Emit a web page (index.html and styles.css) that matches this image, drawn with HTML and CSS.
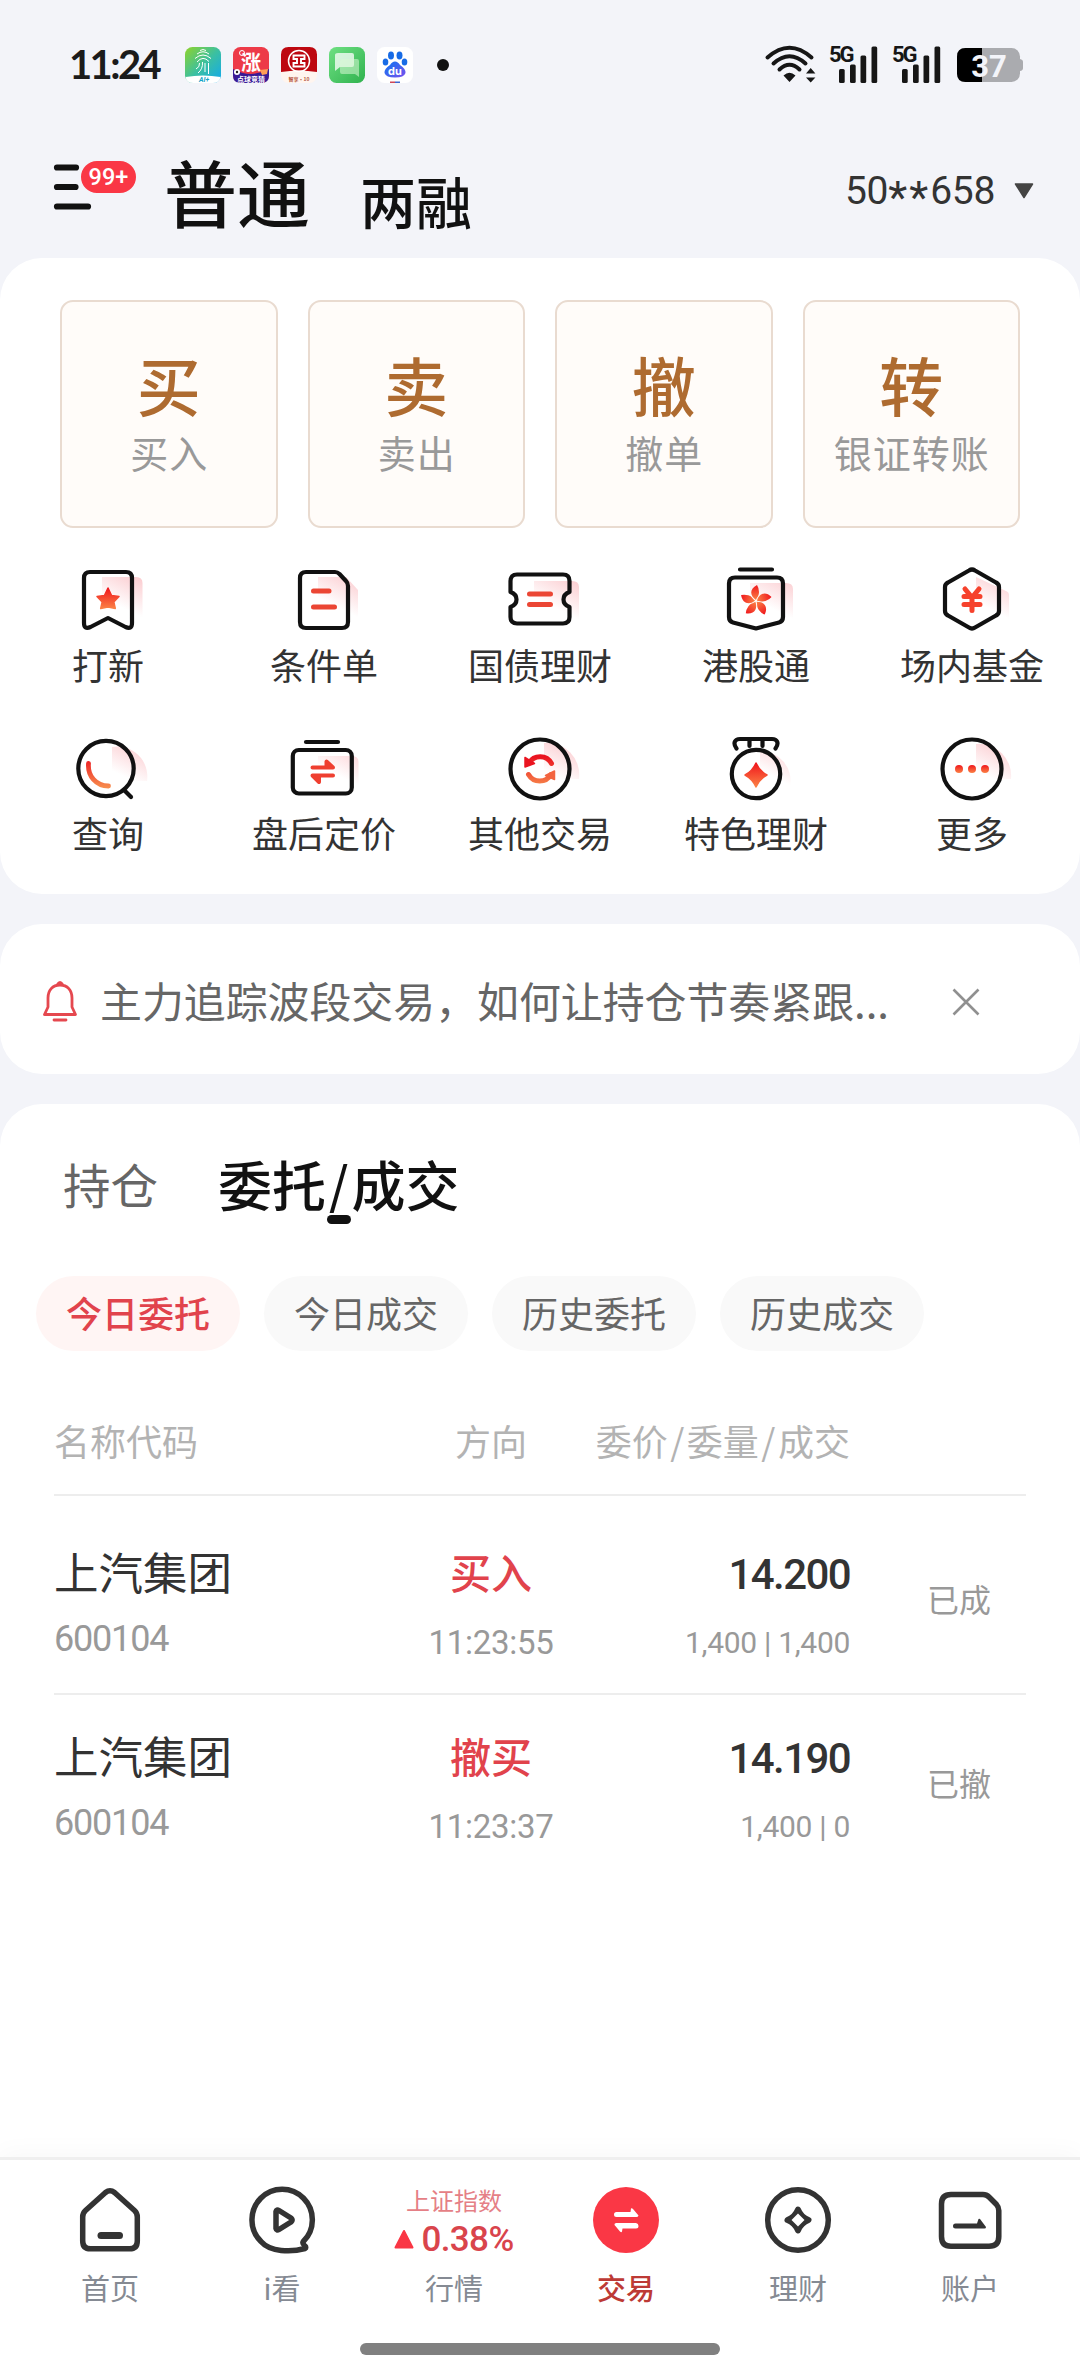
FILE: index.html
```html
<!DOCTYPE html>
<html lang="zh-CN">
<head>
<meta charset="utf-8">
<title>交易</title>
<link rel="stylesheet" href="styles.css">
</head>
<body>
<svg class="defs" width="0" height="0" aria-hidden="true">
  <defs>
    <linearGradient id="hot" x1="0" y1="0" x2="0" y2="1"><stop offset="0" stop-color="#f0161c"/><stop offset="1" stop-color="#fb8246"/></linearGradient>
    <linearGradient id="hotUser" gradientUnits="userSpaceOnUse" x1="0" y1="24" x2="0" y2="54"><stop offset="0" stop-color="#ea1420"/><stop offset="1" stop-color="#f78a4c"/></linearGradient>
    <linearGradient id="glow" gradientUnits="userSpaceOnUse" x1="70" y1="10" x2="53" y2="44"><stop offset="0" stop-color="#fbc8cc"/><stop offset="1" stop-color="#fbc8cc" stop-opacity="0"/></linearGradient>
  </defs>
</svg>
<div class="screen">
  <div class="statusbar">
    <span class="clock">11:24</span>
    <div class="apps">
      <svg viewBox="0 0 36 36"><defs><linearGradient id="a1" x1="0" y1="0" x2="1" y2="1"><stop offset="0" stop-color="#8fd32a"/><stop offset=".5" stop-color="#3cc0a0"/><stop offset="1" stop-color="#10a8f0"/></linearGradient></defs><rect width="36" height="36" rx="7.5" fill="url(#a1)"/><path d="M.5 30Q18 27 35.500 30Q34.500 36 28 36H8Q1.500 36 .5 30Z" fill="#fff"/><g fill="none" stroke="#fff" stroke-width="1"><path d="M15 3.500Q18 1.500 21 3.500M12 7Q18 2.500 24 7M10 11.500Q18 4.500 26 11.500M12 15Q18 8 24 14.500M13 26Q18 22 17.500 15M20 16V25M23.500 16V27M11 22Q15 20 14.500 16"/></g><text x="19" y="35" class="t-ai">AI+</text></svg>
      <svg viewBox="0 0 36 36"><rect width="36" height="36" rx="7.500" fill="#ed3a48"/><path d="M0 22Q18 32 36 22V28.500Q36 36 28.500 36H7.500Q0 36 0 28.500Z" fill="#391a96"/><circle cx="4" cy="25" r="3" fill="#fff"/><circle cx="4" cy="25" r="1.200" fill="#222"/><path d="M27 23L35 22 34 27 29 28Z" fill="#ff9d57"/><circle cx="9" cy="6" r="2.500" fill="none" stroke="#fff"/><text x="18" y="23" class="t-up">涨</text><text x="18" y="34.500" class="t-game">点球竞猜</text></svg>
      <svg viewBox="0 0 36 36"><rect width="36" height="36" rx="7.500" fill="#fff5ef"/><path d="M0 25V7.500Q0 0 7.500 0H28.500Q36 0 36 7.500V25Q18 22 0 25Z" fill="#bd0710"/><g fill="none" stroke="#fff"><circle cx="18" cy="14" r="10.500" stroke-width="1.500"/><path stroke-width="1.900" d="M12.500 8.500H23.500V12H20V16H23.500V19.500H12.500V16H16V12H12.500Z"/></g><text x="18" y="34" class="t-bank">智享·10</text></svg>
      <svg viewBox="0 0 36 36"><defs><linearGradient id="a4" x1="0" y1="0" x2="1" y2="1"><stop offset="0" stop-color="#6fe083"/><stop offset="1" stop-color="#2fb24e"/></linearGradient></defs><rect width="36" height="36" rx="7.500" fill="url(#a4)"/><path d="M9 6H23Q25 6 25 8V18Q25 20 23 20H11L6 24V8Q6 6 9 6Z" fill="#fff" opacity=".75"/><path d="M13 12H28Q30 12 30 14V30L26 27H13Q11 27 11 25V14Q11 12 13 12Z" fill="#d8f8d5" opacity=".55"/></svg>
      <svg viewBox="0 0 36 36"><defs><linearGradient id="a5" x1="0" y1="0" x2="1" y2="1"><stop offset="0" stop-color="#0a76f0"/><stop offset="1" stop-color="#7950ee"/></linearGradient></defs><rect width="36" height="36" rx="7.500" fill="#fff"/><g fill="#176be6"><ellipse cx="14" cy="8.500" rx="3" ry="4"/><ellipse cx="22.500" cy="8.500" rx="3" ry="4"/><ellipse cx="8.500" cy="15" rx="2.800" ry="3.500"/><ellipse cx="27.500" cy="15" rx="2.800" ry="3.500"/></g><path d="M18 14.500Q21 14.500 23 18Q29 22 28.500 26Q27 30.500 18 30.500T7.500 26Q7 22 13 18Q15 14.500 18 14.500Z" fill="url(#a5)"/><text x="18" y="28" class="t-du">du</text><path d="M13 34.500H18V36H13Z" fill="#cd4657"/><path d="M18 34.500H23V36H18Z" fill="#3f68d0"/></svg>
    </div>
    <i class="more-dot"></i>
    <div class="signals">
      <svg class="wifi" viewBox="0 0 51 38"><g fill="none" stroke="#161616" stroke-width="4" stroke-linecap="round"><path d="M2.500 12.500Q24.500-7 46.500 12.500M8.500 18.500Q24.500 4 40.500 18.500M14.500 24.500Q24.500 15 34.500 24.500"/></g><path d="M18.500 30.500Q24.500 25 30.500 30.500L24.500 37Z M41 28.500L45.700 23 50.400 28.500Z M41 32.500H50.400L45.700 37.500Z" fill="#161616"/></svg>
      <svg class="cell" viewBox="0 0 50 38"><text x="0" y="17" class="t-5g">5G</text><g fill="#161616"><rect x="10" y="24" width="5.700" height="14" rx="1.500"/><rect x="21" y="19.500" width="5.700" height="18.500" rx="1.500"/><rect x="31.500" y="10.500" width="5.700" height="27.500" rx="1.500"/><rect x="42.500" y="1.500" width="5.700" height="36.500" rx="1.500"/></g></svg>
      <svg class="cell" viewBox="0 0 50 38"><text x="0" y="17" class="t-5g">5G</text><g fill="#161616"><rect x="10" y="24" width="5.700" height="14" rx="1.500"/><rect x="21" y="19.500" width="5.700" height="18.500" rx="1.500"/><rect x="31.500" y="10.500" width="5.700" height="27.500" rx="1.500"/><rect x="42.500" y="1.500" width="5.700" height="36.500" rx="1.500"/></g></svg>
      <svg class="battery" viewBox="0 0 66 34"><rect width="63" height="34" rx="8.500" fill="#aaabaf"/><path d="M63 11Q66 11.500 66 14V20Q66 22.500 63 23Z" fill="#aaabaf"/><path d="M25 0V34H8.500Q0 34 0 25.500V8.500Q0 0 8.500 0Z" fill="#000"/><text x="32" y="28.500" class="t-bat">37</text></svg>
    </div>
  </div>

  <header class="topbar">
    <div class="menu">
      <svg viewBox="0 0 37 46"><path d="M3 3.500H22M3 23H21.500M3 42.500H34" fill="none" stroke="#111" stroke-width="6.200" stroke-linecap="round"/></svg>
      <span class="badge">99+</span>
    </div>
    <span class="mode mode-on">普通</span>
    <span class="mode">两融</span>
    <div class="account"><span>50<b>**</b>658</span><svg viewBox="0 0 20 16"><path d="M1.500 1H18.500L10 14.500Z" fill="#444" stroke="#444" stroke-width="1.500" stroke-linejoin="round"/></svg></div>
  </header>

  <section class="card actions">
    <div class="quick">
      <div class="tile"><b>买</b><span>买入</span></div>
      <div class="tile"><b>卖</b><span>卖出</span></div>
      <div class="tile"><b>撤</b><span>撤单</span></div>
      <div class="tile"><b>转</b><span>银证转账</span></div>
    </div>
    <div class="grid">
      <div class="entry"><svg viewBox="0 0 72 72"><path class="glow" d="M30 12H64Q70.500 12 70.500 18V55H30Z"/><path class="ink" d="M18 7H54Q60 7 60 13V58Q60 65 53.500 62L36 53 18.500 62Q12 65 12 58V13Q12 7 18 7Z"/><path d="M36 23L39.600 30.500 47 31.500 41.800 37 43.300 43.500 36 42 28.700 43.500 30.200 37 25 31.500 32.400 30.500Z" fill="url(#hot)" stroke="url(#hot)" stroke-width="1.500" stroke-linejoin="round"/></svg><span>打新</span></div>
      <div class="entry"><svg viewBox="0 0 72 72"><path class="glow" d="M30 12H58L70 25V60H30Z"/><path class="ink" d="M18 7H47Q49.500 7 51.500 9L58 16Q60 18 60 21V57Q60 63 54 63H18Q12 63 12 57V13Q12 7 18 7Z"/><path class="red" d="M25.500 26H41M25.500 42H46.500"/></svg><span>条件单</span></div>
      <div class="entry"><svg viewBox="0 0 72 72"><path class="glow" d="M30 16H68Q75 16 75 22V55H30Z"/><path class="ink" d="M13 9.500H59Q65.500 9.500 65.500 16V27Q59.500 29 59.500 34.500T65.500 42V52Q65.500 58.500 59 58.500H13Q6.500 58.500 6.500 52V42Q12.500 40 12.500 34.500T6.500 27V16Q6.500 9.500 13 9.500Z"/><path class="red" d="M25.500 29H46.500M25.500 39.500H46.500"/></svg><span>国债理财</span></div>
      <div class="entry"><svg viewBox="0 0 72 72"><path class="glow" d="M30 18H66Q73 18 73 24V55H30Z"/><path class="ink" d="M20 4.500H52M15 12.500H57Q63 12.500 63 18.500V52Q63 56.500 59 57.500L36 63.500 13 57.500Q9 56.500 9 52V18.500Q9 12.500 15 12.500Z"/><g fill="url(#hot)"><path id="pt" d="M36 35C30 31 29 24 37 20Q39 23 39 27C39 31 37 32 36 35Z"/><use href="#pt" transform="rotate(72 36 36)"/><use href="#pt" transform="rotate(144 36 36)"/><use href="#pt" transform="rotate(216 36 36)"/><use href="#pt" transform="rotate(288 36 36)"/></g></svg><span>港股通</span></div>
      <div class="entry"><svg viewBox="0 0 72 72"><path class="glow" d="M40 12L70 26Q73 27 73 30V62H40Z"/><path class="ink" d="M33 5.500Q36 3.500 39 5.500L60 17.500Q63 19 63 22V46Q63 49 60 50.500L39 62.500Q36 64.500 33 62.500L12 50.500Q9 49 9 46V22Q9 19 12 17.500Z"/><path class="yen" d="M29 24L36 32.500 43 24M28 31.500H44M28 39.500H44M36 32V45.500"/></svg><span>场内基金</span></div>

      <div class="entry"><svg viewBox="0 0 72 72"><path class="glow" d="M40 14A30 30 0 0 1 75 48L40 48Z"/><circle class="ink" cx="34" cy="35.500" r="27.700"/><path class="ink" d="M53 58L59 64"/><path d="M16.500 30.500C15.500 43 24 53 36.500 53" fill="none" stroke="url(#hotUser)" stroke-width="4.800" stroke-linecap="round"/></svg><span>查询</span></div>
      <div class="entry"><svg viewBox="0 0 72 72"><path class="glow" d="M30 23H64Q70.500 23 70.500 29V58H30Z"/><path class="ink" d="M18 9H50"/><rect class="ink" x="4.800" y="17" width="59" height="43.500" rx="6"/><path class="arrows" d="M24.500 34.500H45L38.500 28.500V34M45 42.500H24.500L31 49V43"/></svg><span>盘后定价</span></div>
      <div class="entry"><svg viewBox="0 0 72 72"><path class="glow" d="M40 10A32 32 0 0 1 75 46L40 46Z"/><circle class="ink" cx="36" cy="36" r="29.500"/><g fill="none" stroke="url(#hotUser)" stroke-width="5" stroke-linecap="round"><path d="M25 30A13 13 0 0 1 47.500 30.500M47 41.500A13 13 0 0 1 24.500 41.500"/></g><path d="M21 24.500V34L30.500 30.500Z" fill="#ea1420" stroke="#ea1420" stroke-width="1.500" stroke-linejoin="round"/><path d="M50.500 46.500V38L41.500 42.500Z" fill="#f36440" stroke="#f36440" stroke-width="1.500" stroke-linejoin="round"/></svg><span>其他交易</span></div>
      <div class="entry"><svg viewBox="0 0 72 72"><path class="glow" d="M40 18A30 30 0 0 1 70 54L40 52Z"/><path class="ink" d="M16.500 15.500C12.500 10 15 6 20 6H52C57 6 59.500 10 55.500 15.500M29.500 7V13M42.500 7V13"/><circle class="ink" cx="36" cy="41" r="24.200"/><path d="M36 30Q39.500 38 47 42Q39.500 46 36 54Q32.500 46 25 42Q32.500 38 36 30Z" fill="url(#hot)" stroke="url(#hot)" stroke-width="1.500" stroke-linejoin="round"/></svg><span>特色理财</span></div>
      <div class="entry"><svg viewBox="0 0 72 72"><path class="glow" d="M40 11A32 32 0 0 1 75 46L40 46Z"/><circle class="ink" cx="36" cy="36" r="29.500"/><g fill="url(#hot)"><circle cx="23" cy="36" r="4"/><circle cx="36" cy="36" r="4"/><circle cx="49" cy="36" r="4"/></g></svg><span>更多</span></div>
    </div>
  </section>

  <section class="card notice">
    <svg class="bell" viewBox="0 0 36 42"><g fill="none" stroke="#e5484f" stroke-width="2.800" stroke-linejoin="round" stroke-linecap="round"><path d="M18 5C10.500 5 6 10.500 6 18V27L2.500 34.500H33.500L30 27V18C30 10.500 25.500 5 18 5ZM15.500 4.500Q18 .5 20.500 4.500M12 40H24"/></g></svg>
    <p>主力追踪波段交易，如何让持仓节奏紧跟...</p>
    <svg class="close" viewBox="0 0 28 28"><path d="M1.500 1.500L26.500 26.500M26.500 1.500L1.500 26.500" stroke="#909090" stroke-width="2.600" fill="none"/></svg>
  </section>

  <section class="card orders">
    <div class="tabs"><span>持仓</span><span class="tab-on">委托<i>/</i>成交</span></div>
    <div class="chips"><span class="chip chip-on">今日委托</span><span class="chip">今日成交</span><span class="chip">历史委托</span><span class="chip">历史成交</span></div>
    <div class="table">
      <div class="row head"><span>名称代码</span><span class="mid">方向</span><span class="num">委价<i>/</i>委量<i>/</i>成交</span></div>
      <div class="row">
        <div><div class="name">上汽集团</div><div class="code">600104</div></div>
        <div class="mid"><div class="side">买入</div><div class="time">11:23:55</div></div>
        <div class="num"><div class="price">14.200</div><div class="vol">1,400 | 1,400</div></div>
        <div class="state">已成</div>
      </div>
      <div class="row">
        <div><div class="name">上汽集团</div><div class="code">600104</div></div>
        <div class="mid"><div class="side">撤买</div><div class="time">11:23:37</div></div>
        <div class="num"><div class="price">14.190</div><div class="vol">1,400 | 0</div></div>
        <div class="state">已撤</div>
      </div>
    </div>
  </section>

  <nav class="tabbar">
    <div class="items">
      <div class="item"><svg viewBox="0 0 72 72"><path class="line" d="M31.500 8.500L11.500 26.500Q8.700 29 8.700 33V57Q8.700 64.800 16.500 64.800H55.500Q63.300 64.800 63.300 57V33Q63.300 29 60.500 26.500L40.500 8.500Q36 5 31.500 8.500Z"/><path d="M27 51.500H45.500" stroke="#333" stroke-width="7" stroke-linecap="round"/></svg><span>首页</span></div>
      <div class="item"><svg viewBox="0 0 72 72"><path class="line" d="M57.300 57.500A30.200 30.500 0 1 0 15 57.500C24 68 45 68.500 59 64.500Q60.500 63.500 59 62Q56 59.500 57.300 57.500Z"/><path class="line" d="M30 27.500Q30.500 25 33 26.500L45 34Q47 36 45 38L33 45.500Q30.500 47 30 44.500Z"/></svg><span>i看</span></div>
      <div class="item"><div class="index"><small>上证指数</small><div class="chg"><svg viewBox="0 0 20 20"><path d="M10 2L18.500 18.500H1.500Z" fill="#fa3745" stroke="#fa3745" stroke-width="2" stroke-linejoin="round"/></svg><b>0.38%</b></div></div><span>行情</span></div>
      <div class="item item-on"><svg viewBox="0 0 72 72"><circle cx="36" cy="36" r="33" fill="#fa3745"/><path d="M26.500 28H40.500L41 24.500Q42 24 43 25L48.500 31.500Q48 33 46.500 33H26.500Q24 33 24 30.500T26.500 28Z M46 39H26Q24 39.500 24.500 41L30 47.500Q31.500 49 32 47.500L32.500 44.500H46Q48.500 44.500 48.500 42T46 39Z" fill="#fff"/></svg><span>交易</span></div>
      <div class="item"><svg viewBox="0 0 72 72"><circle class="line" cx="36" cy="36" r="30.300"/><path d="M36 25.500Q39 33 46.500 36Q39 39 36 46.500Q33 39 25.500 36Q33 33 36 25.500Z" fill="#333" stroke="#333" stroke-width="6" stroke-linejoin="round"/><path d="M36 29.500L42.500 36 36 42.500 29.500 36Z" fill="#fff"/></svg><span>理财</span></div>
      <div class="item"><svg viewBox="0 0 72 72"><path class="line" d="M17 10.500H49Q52.500 10.500 55 13L62.500 20.500Q64.800 23 64.800 26.500V52.500Q64.800 62.300 55 62.300H17Q7.500 62.300 7.500 52.500V20Q7.500 10.500 17 10.500Z"/><path d="M21.500 39.500H43L44.500 35Q45.500 34.500 46 35L52 43Q52 44.500 50.500 44.500H21.500Q19 44.500 19 42T21.500 39.500Z" fill="#333"/></svg><span>账户</span></div>
    </div>
    <div class="homebar"></div>
  </nav>
</div>
</body>
</html>
```
FILE: styles.css
```css
* { box-sizing: border-box; }
body { margin: 0; background: #f3f4f9; font-family: "Noto Sans CJK SC", "Noto Sans", sans-serif; color: #333; }
.defs { display: block; }
svg { display: block; flex: none; overflow: visible; }
b { font-weight: 500; }
i { font-style: normal; }
.screen { width: 1080px; height: 2376px; display: flex; flex-direction: column; overflow: hidden; }

/* status bar */
.statusbar { height: 130px; display: flex; align-items: center; padding: 0 57px 0 69px; }
.clock { width: 116px; font: 700 40px/48px Lato, sans-serif; color: #1b1b1b; letter-spacing: -2.6px; white-space: nowrap; margin-top: -2px; }
.apps { display: flex; gap: 12px; }
.apps svg { width: 36px; height: 36px; }
.more-dot { width: 12px; height: 12px; border-radius: 50%; background: #111; margin-left: 24px; }
.signals { display: flex; align-items: center; margin-left: auto; }
.wifi { width: 51px; height: 38px; margin: -3px 13px 0 0; }
.cell { width: 50px; height: 38px; margin: -3px 13px 0 0; }
.battery { width: 66px; height: 34px; margin-left: 2px; }
.t-ai { font: italic 700 7px Roboto, sans-serif; fill: #18a4c8; text-anchor: middle; }
.t-up { font: 700 20px "Noto Sans CJK SC", sans-serif; fill: #fff; text-anchor: middle; }
.t-game { font: 700 7px "Noto Sans CJK SC", sans-serif; fill: #fff; text-anchor: middle; }
.t-bank { font: 700 5px "Noto Sans CJK SC", sans-serif; fill: #b5563c; text-anchor: middle; }
.t-du { font: 700 11px Inter, sans-serif; fill: #fff; text-anchor: middle; }
.t-5g { font: 700 22px Roboto, sans-serif; fill: #161616; letter-spacing: -2px; }
.t-bat { font: 700 31px Roboto, sans-serif; fill: #f3f4f9; text-anchor: middle; }

/* header */
.topbar { height: 128px; display: flex; padding-left: 54px; padding-right: 46px; }
.menu { position: relative; width: 111px; padding-top: 34px; }
.menu svg { width: 37px; height: 46px; }
.badge { position: absolute; left: 25px; top: 29px; width: 59px; height: 36px; border: 2px solid #f3f4f9; border-radius: 18px; background: #fa3745; color: #fff; font: 500 23.500px/33px Roboto, sans-serif; text-align: center; }
.mode { font-size: 56px; line-height: 80px; font-weight: 500; color: #111; margin-top: 30px; margin-left: 47px; }
.mode-on { font-size: 73px; line-height: 108px; margin: 6px 3px 0 -1px; }
.account { margin-left: auto; margin-top: 37px; height: 48px; display: flex; align-items: center; gap: 19px; font: 400 39px/48px Roboto, sans-serif; color: #333; letter-spacing: -0.3px; }
.account b { font-size: 44px; line-height: 20px; vertical-align: -9px; font-weight: 400; letter-spacing: 2px; }
.account svg { width: 20px; height: 16px; }

/* cards */
.card { background: #fff; border-radius: 42px; flex: none; }
.actions { height: 636px; padding: 42px 0 0; }
.quick { display: grid; grid-template-columns: repeat(4, 1fr); gap: 30px; padding: 0 60px; }
.tile { height: 228px; border: 2px solid #e9dbd0; border-radius: 13px; background: #fffcf9; display: flex; flex-direction: column; align-items: center; padding-top: 44px; }
.tile b { font-size: 64px; line-height: 74px; color: #ae6b30; }
.tile span { font-size: 38px; line-height: 56px; color: #999; letter-spacing: 1px; margin-right: -1px; margin-top: 4px; }
.grid { display: grid; grid-template-columns: repeat(5, 216px); grid-auto-rows: 168px; padding-top: 37px; }
.entry { display: flex; flex-direction: column; align-items: center; }
.entry svg { width: 72px; height: 72px; }
.entry span { font-size: 36px; line-height: 50px; margin-top: 2px; white-space: nowrap; }
.glow { fill: url(#glow); }
.ink { fill: none; stroke: #111; stroke-width: 4.2; stroke-linecap: round; stroke-linejoin: round; }
.red { fill: none; stroke: #eb4634; stroke-width: 5; stroke-linecap: round; }
.yen { fill: none; stroke: #f6422c; stroke-width: 5; stroke-linecap: round; }
.arrows { fill: #ef3f30; stroke: #ef3f30; stroke-width: 4; stroke-linejoin: round; stroke-linecap: round; }

.notice { height: 150px; margin: 30px 0; display: flex; align-items: center; padding: 0 100px 0 42px; }
.bell { width: 36px; height: 42px; margin-top: 3px; }
.notice p { margin: 1px 0 0 22px; font-size: 41.900px; line-height: 60px; color: #666; white-space: nowrap; }
.close { width: 28px; height: 28px; margin-left: auto; margin-top: 5px; }

/* orders */
.orders { flex: 1 1 0; border-radius: 42px 42px 0 0; min-height: 0; }
.tabs { display: flex; align-items: center; height: 172px; padding-left: 63px; gap: 60px; font-size: 47.500px; line-height: 70px; color: #666; padding-bottom: 12px; }
.tab-on { position: relative; font-size: 54px; color: #111; font-weight: 500; }
.tab-on i { margin: 0 3px; font-size: 50px; line-height: 50px; vertical-align: 3px; }
.tab-on::after { content: ""; position: absolute; left: 50%; margin-left: -12px; bottom: -5px; width: 24px; height: 9px; border-radius: 5px; background: #111; }
.chips { display: flex; gap: 24px; padding-left: 36px; }
.chip { width: 204px; height: 75px; border-radius: 38px; background: #f9f9f9; color: #666; font-size: 36px; line-height: 72px; text-align: center; }
.chip-on { background: #fff5f4; color: #e1434c; font-weight: 500; }
.table { padding: 0 54px; margin-top: 53px; }
.row { height: 184px; display: grid; grid-template-columns: 324px 226px 246px 1fr; padding-top: 26px; }
.row + .row { border-top: 2px solid #ededed; }
.head { height: 90px; padding-top: 8px; font-size: 36px; line-height: 56px; color: #b3b3b3; }
.head + .row { height: 199px; padding-top: 41px; }
.head i { margin: 0 2.5px; }
.mid { text-align: center; }
.num { text-align: right; white-space: nowrap; margin-left: -40px; }
.name { font-size: 44.500px; line-height: 68px; }
.code { font: 400 36px/50px Roboto, sans-serif; color: #999; letter-spacing: -1.2px; margin-top: 9px; }
.side { font-size: 41px; line-height: 68px; color: #e1434c; font-weight: 500; }
.time { font: 400 33px/50px Roboto, sans-serif; color: #999; margin-top: 13px; letter-spacing: -0.3px; }
.price { font: 500 42px/68px Roboto, sans-serif; letter-spacing: -1.6px; padding-top: 4px; }
.vol { font: 400 30px/50px Roboto, sans-serif; color: #999; margin-top: 9px; letter-spacing: -0.3px; }
.state { font-size: 32px; line-height: 50px; color: #999; padding: 36px 0 0 77px; }

/* bottom navigation */
.tabbar { height: 219px; flex: none; background: #fff; border-top: 3px solid #efefef; box-shadow: 0 -4px 24px rgba(0, 0, 0, 0.03); position: relative; }
.items { display: grid; grid-template-columns: repeat(6, 172px); padding: 24px 24px 0; }
.item { display: flex; flex-direction: column; align-items: center; color: #858a93; }
.item > svg { width: 72px; height: 72px; }
.item > span { font-size: 29px; line-height: 44px; margin-top: 9px; }
.item-on { color: #bd3a35; }
.item-on > span { font-weight: 500; }
.line { fill: none; stroke: #333; stroke-width: 5.5; stroke-linejoin: round; }
.index { height: 72px; display: flex; flex-direction: column; align-items: center; padding-top: 1px; }
.index small { font-size: 24px; line-height: 30px; color: #e57f86; }
.chg { display: flex; align-items: center; gap: 7px; height: 42px; }
.chg svg { width: 20px; height: 20px; margin-top: 5px; }
.chg b { font: 500 35px/42px Roboto, sans-serif; color: #d9444c; padding-top: 7px; letter-spacing: -0.6px; }
.homebar { width: 360px; height: 12px; border-radius: 6px; background: #808080; margin: 34px auto 0; }
```
